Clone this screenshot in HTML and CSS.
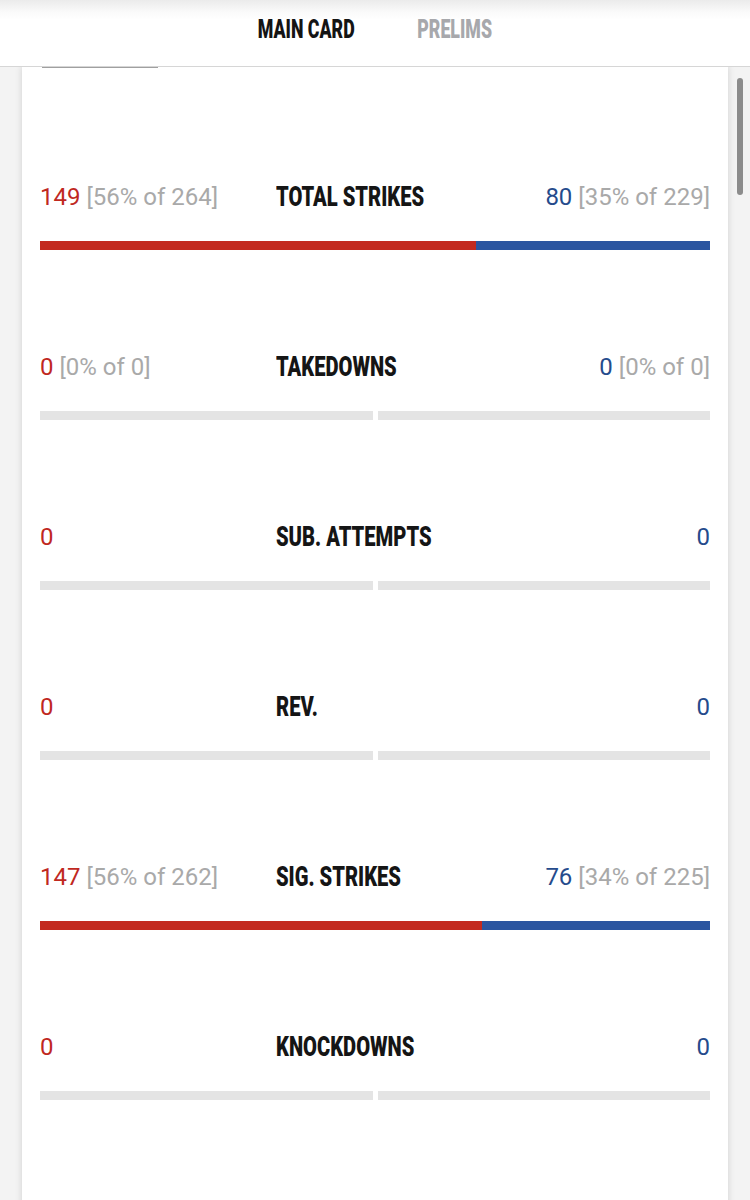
FILE: index.html
```html
<!DOCTYPE html>
<html>
<head>
<meta charset="utf-8">
<link rel="stylesheet" href="styles.css">
</head>
<body>
<header class="tabs">
  <span class="tab tab-main active"><span class="cond">MAIN CARD</span></span>
  <span class="tab tab-prelims"><span class="cond">PRELIMS</span></span>
</header>
<div class="page">
  <main class="card">
    <div class="indicator"></div>
    <section class="row">
      <div class="stat">
        <div class="side left"><span class="red">149</span> <span class="muted">[56% of 264]</span></div>
        <div class="label"><span class="cond">TOTAL STRIKES</span></div>
        <div class="side right"><span class="blue">80</span> <span class="muted">[35% of 229]</span></div>
      </div>
      <div class="bar full"><div class="fill-red" style="width:65.07%"></div><div class="fill-blue"></div></div>
    </section>
    <section class="row">
      <div class="stat">
        <div class="side left"><span class="red">0</span> <span class="muted">[0% of 0]</span></div>
        <div class="label"><span class="cond">TAKEDOWNS</span></div>
        <div class="side right"><span class="blue">0</span> <span class="muted">[0% of 0]</span></div>
      </div>
      <div class="bar empty"><div class="half"></div><div class="half"></div></div>
    </section>
    <section class="row">
      <div class="stat">
        <div class="side left"><span class="red">0</span></div>
        <div class="label"><span class="cond">SUB. ATTEMPTS</span></div>
        <div class="side right"><span class="blue">0</span></div>
      </div>
      <div class="bar empty"><div class="half"></div><div class="half"></div></div>
    </section>
    <section class="row">
      <div class="stat">
        <div class="side left"><span class="red">0</span></div>
        <div class="label"><span class="cond">REV.</span></div>
        <div class="side right"><span class="blue">0</span></div>
      </div>
      <div class="bar empty"><div class="half"></div><div class="half"></div></div>
    </section>
    <section class="row">
      <div class="stat">
        <div class="side left"><span class="red">147</span> <span class="muted">[56% of 262]</span></div>
        <div class="label"><span class="cond">SIG. STRIKES</span></div>
        <div class="side right"><span class="blue">76</span> <span class="muted">[34% of 225]</span></div>
      </div>
      <div class="bar full"><div class="fill-red" style="width:65.92%"></div><div class="fill-blue"></div></div>
    </section>
    <section class="row">
      <div class="stat">
        <div class="side left"><span class="red">0</span></div>
        <div class="label"><span class="cond">KNOCKDOWNS</span></div>
        <div class="side right"><span class="blue">0</span></div>
      </div>
      <div class="bar empty"><div class="half"></div><div class="half"></div></div>
    </section>
  </main>
  <div class="scroll-thumb"></div>
</div>
</body>
</html>
```

FILE: styles.css
```css
html, body {
  margin: 0;
  padding: 0;
}
body {
  width: 750px;
  height: 1200px;
  overflow: hidden;
  background: #f3f3f3;
  font-family: Roboto, "Liberation Sans", sans-serif;
}
.tabs {
  height: 60px;
  padding-bottom: 6px;
  border-bottom: 1px solid #d6d6d6;
  background: linear-gradient(#ebebeb, #fafafa 12px, #ffffff 20px);
  display: flex;
  justify-content: center;
  align-items: center;
  gap: 62px;
  padding-left: 1px;
}
.tab {
  font-weight: 900;
  font-size: 25px;
  line-height: 30px;
  color: #a7a8ac;
  white-space: nowrap;
  display: flex;
  justify-content: center;
}
.tab.active {
  color: #141414;
}
.tab-main { width: 97px; }
.tab-prelims { width: 76px; }
.tab .cond {
  display: inline-block;
  transform: scaleX(0.71);
  transform-origin: center;
}
.page {
  position: relative;
  padding: 0 22px;
  height: 1133px;
  overflow: hidden;
}
.card {
  background: #fff;
  box-shadow: 0 0 7px rgba(0,0,0,0.14);
  height: 1200px;
  padding: 0 18px;
}
.indicator {
  width: 116px;
  height: 2px;
  margin-left: 2px;
  background: #a0a0a0;
  margin-top: -1px;
}
.row {
  height: 170px;
}
.card .row:first-of-type {
  margin-top: 114px;
}
.stat {
  display: flex;
  align-items: center;
  height: 30px;
}
.side {
  font-size: 24px;
  line-height: 30px;
  white-space: nowrap;
}
.side.left {
  width: 236px;
}
.side.right {
  flex: 1;
  text-align: right;
}
.red { color: #c0281f; }
.blue { color: #254b8c; }
.muted { color: #a9a9a9; }
.label {
  font-weight: 900;
  font-size: 28px;
  line-height: 30px;
  color: #151515;
  white-space: nowrap;
  width: 200px;
}
.label .cond {
  display: inline-block;
  transform: scaleX(0.72);
  transform-origin: left center;
}
.bar {
  margin-top: 29px;
  height: 9px;
  display: flex;
}
.fill-red {
  background: #c32a1f;
  height: 100%;
}
.fill-blue {
  background: #2b55a0;
  height: 100%;
  flex: 1;
}
.bar.empty {
  gap: 5px;
}
.half {
  flex: 1;
  background: #e4e4e4;
  height: 100%;
}
.scroll-thumb {
  position: absolute;
  left: 737px;
  top: 11px;
  width: 6px;
  height: 117px;
  border-radius: 3px;
  background: #8c8c8c;
}
```
